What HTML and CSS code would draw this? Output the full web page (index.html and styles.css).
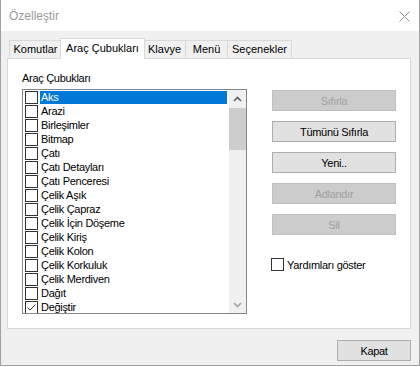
FILE: index.html
```html
<!DOCTYPE html>
<html lang="tr">
<head>
  <meta charset="UTF-8" />
  <title>Özelleştir</title>
  <link rel="stylesheet" href="styles.css">
</head>
<body>

<div class="window">
  <div class="titlebar">
    <span class="title">Özelleştir</span>
    <svg class="close" width="11" height="11" viewBox="0 0 11 11">
      <line x1="0.5" y1="0.5" x2="10.5" y2="10.5" />
      <line x1="10.5" y1="0.5" x2="0.5" y2="10.5" />
    </svg>
  </div>

  <div class="content">
    <!-- Sekmeler -->
    <div class="tabs">
      <div class="tab tab-1">Komutlar</div>
      <div class="tab tab-active">Araç Çubukları</div>
      <div class="tab tab-3">Klavye</div>
      <div class="tab tab-4">Menü</div>
      <div class="tab tab-5">Seçenekler</div>
    </div>

    <div class="panel">
      <div class="left">
        <div class="label">Araç Çubukları</div>
        <div class="listbox">
          <div class="items">
            <div class="item selected"><span class="box"></span><span class="name">Aks</span></div>
            <div class="item"><span class="box"></span><span class="name">Arazi</span></div>
            <div class="item"><span class="box"></span><span class="name">Birleşimler</span></div>
            <div class="item"><span class="box"></span><span class="name">Bitmap</span></div>
            <div class="item"><span class="box"></span><span class="name">Çatı</span></div>
            <div class="item"><span class="box"></span><span class="name">Çatı Detayları</span></div>
            <div class="item"><span class="box"></span><span class="name">Çatı Penceresi</span></div>
            <div class="item"><span class="box"></span><span class="name">Çelik Aşık</span></div>
            <div class="item"><span class="box"></span><span class="name">Çelik Çapraz</span></div>
            <div class="item"><span class="box"></span><span class="name">Çelik İçin Döşeme</span></div>
            <div class="item"><span class="box"></span><span class="name">Çelik Kiriş</span></div>
            <div class="item"><span class="box"></span><span class="name">Çelik Kolon</span></div>
            <div class="item"><span class="box"></span><span class="name">Çelik Korkuluk</span></div>
            <div class="item"><span class="box"></span><span class="name">Çelik Merdiven</span></div>
            <div class="item"><span class="box"></span><span class="name">Dağıt</span></div>
            <div class="item">
              <span class="box">
                <svg width="11" height="11" viewBox="0 0 11 11"><polyline points="1.5,5.5 4,8 9.5,2.5" /></svg>
              </span>
              <span class="name">Değiştir</span>
            </div>
          </div>
          <div class="scrollbar">
            <div class="arrow up">
              <svg width="9" height="6" viewBox="0 0 9 6"><polyline points="1,5 4.5,1.5 8,5" /></svg>
            </div>
            <div class="thumb"></div>
            <div class="track"></div>
            <div class="arrow down">
              <svg width="9" height="6" viewBox="0 0 9 6"><polyline points="1,1 4.5,4.5 8,1" /></svg>
            </div>
          </div>
        </div>
      </div>

      <div class="right">
        <button class="btn" disabled>Sıfırla</button>
        <button class="btn">Tümünü Sıfırla</button>
        <button class="btn">Yeni..</button>
        <button class="btn" disabled>Adlandır</button>
        <button class="btn" disabled>Sil</button>
        <label class="check">
          <span class="box"></span>
          <span>Yardımları göster</span>
        </label>
      </div>
    </div>

    <div class="footer">
      <button class="btn btn-close">Kapat</button>
    </div>
  </div>
</div>

</body>
</html>
```

FILE: styles.css
```css
body {
  margin: 0;
  background: #ffffff;
  font-family: "Liberation Sans", Arial, sans-serif;
  font-size: 11px;
  color: #000;
}

.window {
  width: 420px;
  height: 366px;
  box-sizing: border-box;
  border: 1px solid #a0a0a0;
  border-top: none;
  background: #f0f0f0;
  display: flex;
  flex-direction: column;
}

.titlebar {
  height: 31px;
  background: #ffffff;
  display: flex;
  align-items: center;
  justify-content: space-between;
  padding: 0 9px 0 8px;
}

.title {
  font-size: 12px;
  color: #999999;
  margin-top: 1px;
}

.close {
  margin-top: 1px;
}

.close line {
  stroke: #8c8c8c;
  stroke-width: 1;
}

.content {
  padding: 7px 8px 0 6px;
}

/* sekmeler */
.tabs {
  height: 20px;
  display: flex;
  align-items: flex-end;
  padding-left: 2px;
}

.tab {
  box-sizing: border-box;
  height: 18px;
  line-height: 16px;
  border: 1px solid #d9d9d9;
  border-bottom: none;
  background: #f0f0f0;
  text-align: center;
  margin-left: -1px;
}

.tab-1 { width: 53px; margin-left: 0; }
.tab-3 { width: 43px; }
.tab-4 { width: 43px; }
.tab-5 { width: 65px; }

.tab-active {
  width: 85px;
  height: 21px;
  line-height: 18px;
  margin-left: -2px;
  margin-right: -1px;
  margin-bottom: -1px;
  background: #ffffff;
  position: relative;
  z-index: 1;
}

.panel {
  box-sizing: border-box;
  height: 271px;
  border: 1px solid #d9d9d9;
  background: #ffffff;
  display: flex;
  padding: 13px 0 0 14px;
}

.label,
.name,
.btn,
.check {
  letter-spacing: -0.3px;
}

.label {
  height: 13px;
  line-height: 13px;
  margin-bottom: 4px;
}

.listbox {
  box-sizing: border-box;
  width: 225px;
  height: 225px;
  border: 1px solid #828790;
  display: flex;
  overflow: hidden;
}

.items {
  width: 206px;
  padding: 1px 0 0 2px;
  box-sizing: border-box;
  overflow: hidden;
}

.item {
  height: 14px;
  display: flex;
  align-items: flex-start;
}

.box {
  box-sizing: border-box;
  width: 13px;
  height: 13px;
  border: 1px solid #333333;
  background: #fff;
  flex: none;
}

.box svg {
  display: block;
}

.box polyline {
  fill: none;
  stroke: #333333;
  stroke-width: 1;
}

.name {
  flex: 1;
  height: 13px;
  line-height: 13px;
  margin: 0 1px 0 2px;
  padding-left: 1px;
  white-space: nowrap;
}

.selected .name {
  background: #0078d7;
  color: #ffffff;
}

.scrollbar {
  width: 17px;
  margin-left: 1px;
  background: #f0f0f0;
  display: flex;
  flex-direction: column;
}

.arrow {
  height: 17px;
  display: flex;
  align-items: center;
  justify-content: center;
}

.arrow polyline {
  fill: none;
  stroke-width: 1.6;
}

.up polyline { stroke: #606060; }
.down polyline { stroke: #a3a3a3; }

.thumb {
  height: 42px;
  margin-top: 1px;
  background: #cdcdcd;
}

.track {
  flex: 1;
}

/* butonlar */
.right {
  margin-left: 25px;
  padding-top: 18px;
  display: flex;
  flex-direction: column;
  gap: 10px;
}

.btn {
  box-sizing: border-box;
  width: 124px;
  height: 21px;
  padding: 0;
  border: 1px solid #adadad;
  background: #e1e1e1;
  font-family: "Liberation Sans", Arial, sans-serif;
  font-size: 11px;
  color: #000;
}

.btn:disabled {
  background: #cccccc;
  border-color: #bfbfbf;
  color: #a0a0a0;
}

.check {
  margin: 13px 0 0 -1px;
  display: flex;
  align-items: center;
  gap: 3px;
}

.footer {
  display: flex;
  justify-content: flex-end;
  margin-top: 11px;
}

.btn-close {
  width: 74px;
}
```
